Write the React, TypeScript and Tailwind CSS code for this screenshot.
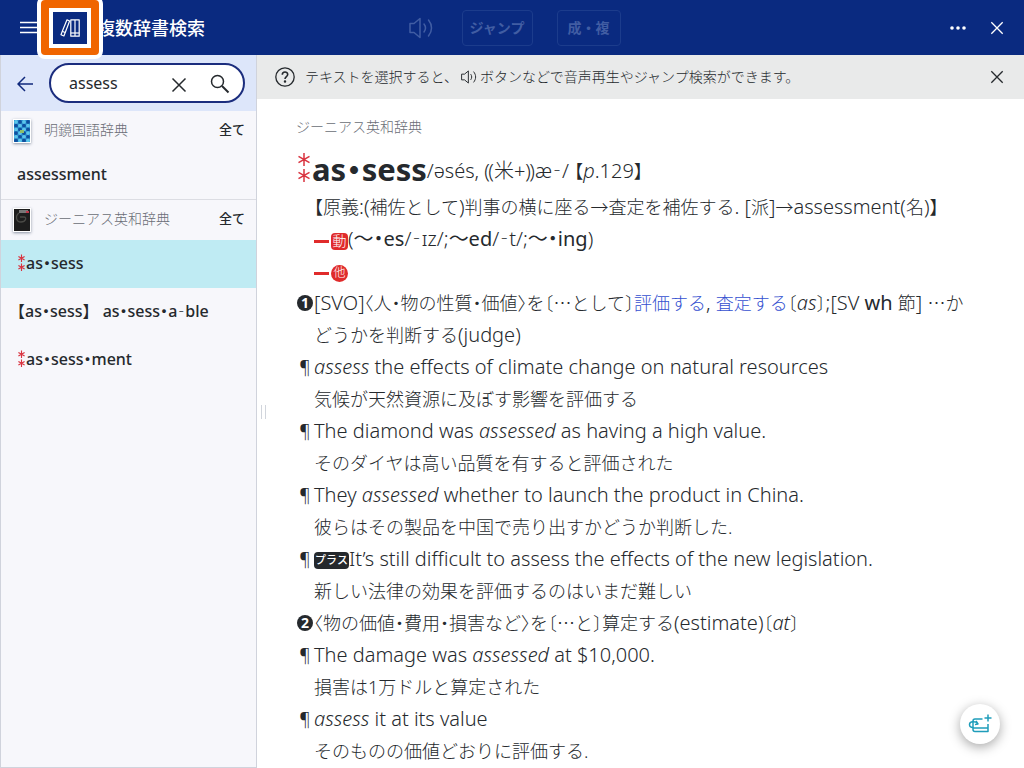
import React, { useState } from 'react';
import clsx from 'clsx';

interface Hit {
  id: string;
  word: string;
  stars?: boolean;
}

interface DictionaryGroup {
  id: string;
  name: string;
  cover: 'blue' | 'black';
  hits: Hit[];
}

const GROUPS: DictionaryGroup[] = [
  {
    id: 'meikyo',
    name: '明鏡国語辞典',
    cover: 'blue',
    hits: [{ id: 'm-1', word: 'assessment' }],
  },
  {
    id: 'genius',
    name: 'ジーニアス英和辞典',
    cover: 'black',
    hits: [
      { id: 'g-1', word: 'as・sess', stars: true },
      { id: 'g-2', word: '【as・sess】 as・sess・a‐ble' },
      { id: 'g-3', word: 'as・sess・ment', stars: true },
    ],
  },
];

const CloseIcon: React.FC<{ className?: string }> = ({ className }) => (
  <svg viewBox="0 0 16 16" className={className} fill="none" stroke="currentColor" strokeWidth="1.5">
    <path d="M1.5 1.5l13 13M14.5 1.5l-13 13" />
  </svg>
);

const SpeakerIcon: React.FC<{ className?: string }> = ({ className }) => (
  <svg viewBox="0 0 26 22" className={className} fill="none" stroke="currentColor" strokeWidth="1.5" strokeLinejoin="round" strokeLinecap="round">
    <path d="M2 6.5h4l6-5v19l-6-5H2z" />
    <path d="M16 7c1.8 2.4 1.8 5.6 0 8M20.5 3c4 4.8 4 11.2 0 16" />
  </svg>
);

const BooksIcon = () => (
  <svg viewBox="0 0 20 18" className="w-5 h-[18px]" fill="none" stroke="currentColor" strokeWidth="1.2" strokeLinejoin="round">
    <path d="M7 .8l2.6 1.2-5.7 15-2.9-1.3 1.5-4z" />
    <path d="M2.2 12.3l2.8 1.2" />
    <path d="M10.8 .8h4.2v16.4h-4.2zM15 .8h4.2v16.4H15z" />
    <path d="M10.8 14h8.4" />
  </svg>
);

const BlueCover = () => (
  <svg viewBox="0 0 16 22" className="w-4 h-[22px]">
    <rect width="16" height="22" fill="#2a8fd0" />
    {[0, 1, 2, 3, 4, 5].map((row) =>
      [0, 1, 2, 3].map((col) => (
        <circle
          key={`${row}-${col}`}
          cx={2 + col * 4}
          cy={2 + row * 3.7}
          r="1.9"
          fill={(row + col) % 2 ? '#0f4f9e' : '#5cc6ea'}
        />
      ))
    )}
    <rect x="6" y="10" width="4" height="3" fill="#8fbf6a" />
  </svg>
);

const BlackCover = () => (
  <svg viewBox="0 0 16 22" className="w-4 h-[22px]">
    <rect width="16" height="22" fill="#1d1d1d" />
    <path d="M5 4c-4 3-3 9 2 9s6-5 3-5H6" fill="none" stroke="#4a4a46" strokeWidth="1.3" />
    <rect x="5" y="1" width="9" height="3" fill="#777" />
    <rect x="12" y="2" width="3" height="2" fill="#c0354a" />
  </svg>
);

const Stars: React.FC<{ large?: boolean }> = ({ large }) => (
  <svg
    viewBox="0 0 14 32"
    className={clsx('inline-block shrink-0', large ? 'w-4 h-8' : 'w-[9px] h-[18px]')}
    fill="none"
    stroke="#d9333f"
    strokeWidth={large ? 1.5 : 2}
  >
    <path d="M7 1v13M1.5 4.3l11 6.4M12.5 4.3l-11 6.4" />
    <path d="M7 17v13M1.5 20.3l11 6.4M12.5 20.3l-11 6.4" />
  </svg>
);

// Syllable dots, hyphens and ellipses come from the Japanese face, set half width
const K: React.FC<{ children: React.ReactNode }> = ({ children }) => (
  <span className="font-['Noto_Sans_CJK_JP',sans-serif] leading-none [font-feature-settings:'halt']">{children}</span>
);

const E: React.FC<{ children: React.ReactNode }> = ({ children }) => (
  <span className="text-xl leading-none">{children}</span>
);

const Word: React.FC<{ text: string }> = ({ text }) => (
  <span>
    {text.split(/([・【‐])/).map((part, i) => (i % 2 ? <K key={i}>{part}</K> : part))}
  </span>
);

const Line: React.FC<{ mark?: React.ReactNode; large?: boolean; children: React.ReactNode }> = ({ mark, large, children }) => (
  <div className="flex">
    <span className="w-[18px] h-8 shrink-0 flex items-center justify-center">{mark}</span>
    <p className={clsx('whitespace-nowrap', large ? 'text-xl leading-8' : 'leading-8')}>{children}</p>
  </div>
);

const SenseNumber: React.FC<{ children: React.ReactNode }> = ({ children }) => (
  <span className="size-4 rounded-full bg-[#25292d] text-white text-sm leading-4 font-bold text-center">{children}</span>
);

const Dash = () => <span className="inline-block w-[15px] h-[3px] mr-0.5 bg-[#e02b2b] align-middle" />;

const Example: React.FC<{ ja: string; children: React.ReactNode }> = ({ ja, children }) => (
  <>
    <Line mark="¶" large>{children}</Line>
    <Line>{ja}</Line>
  </>
);

export default function App() {
  const [query, setQuery] = useState('assess');
  const [selected, setSelected] = useState('g-1');
  const [showTip, setShowTip] = useState(true);

  return (
    <div className="h-screen flex flex-col overflow-hidden bg-white text-[#25292d] font-['Noto_Sans','Noto_Sans_CJK_JP',sans-serif]">
      <header className="relative h-[55px] shrink-0 flex items-center bg-[#0a2a80] text-white">
        <div className="flex-1 flex items-center">
          <button aria-label="メニュー" className="ml-5 w-5">
            <svg viewBox="0 0 20 14" className="w-5 h-3.5" stroke="currentColor" strokeWidth="1.5">
              <path d="M0 1.5h20M0 6.5h20M0 11.5h20" />
            </svg>
          </button>
          <h1 className="ml-[57px] text-lg font-medium">複数辞書検索</h1>
        </div>
        {/* highlighted shortcut to the multi-dictionary search */}
        <button
          aria-label="辞書"
          className="absolute left-[37px] -top-1 w-[66px] h-[63px] rounded-lg border-4 border-white bg-[#f06500] flex items-center justify-center"
        >
          <span className="w-[42px] h-10 border-4 border-white bg-[#0a2a80] flex items-center justify-center">
            <BooksIcon />
          </span>
        </button>
        <div className="pl-6 flex items-center gap-6 text-[#415da3]">
          <button disabled aria-label="音声" className="mr-1">
            <SpeakerIcon className="w-[26px] h-[22px]" />
          </button>
          <button disabled className="w-[71px] h-9 rounded border border-[#1c3c8c] text-sm font-bold">ジャンプ</button>
          <button disabled className="w-16 h-9 rounded border border-[#1c3c8c] text-sm font-bold">成・複</button>
        </div>
        <div className="flex-1 flex items-center justify-end gap-6 pr-5">
          <button aria-label="その他">
            <svg viewBox="0 0 16 4" className="w-4 h-1" fill="currentColor">
              <circle cx="2" cy="2" r="1.8" />
              <circle cx="8" cy="2" r="1.8" />
              <circle cx="14" cy="2" r="1.8" />
            </svg>
          </button>
          <button aria-label="閉じる">
            <CloseIcon className="size-3.5" />
          </button>
        </div>
      </header>

      <div className="flex-1 min-h-0 flex">
        <aside className="w-[257px] shrink-0 flex flex-col border-x border-b border-[#d0d3dc] bg-[#f7f7fb]">
          <form className="h-14 shrink-0 flex items-center pl-4 pr-[11px] bg-[#dde6fa]" onSubmit={(e) => e.preventDefault()}>
            <button type="button" aria-label="戻る" className="pt-0.5 text-[#10297c]">
              <svg viewBox="0 0 16 16" className="size-4" fill="none" stroke="currentColor" strokeWidth="1.5">
                <path d="M16 8H1M8 1L1 8l7 7" />
              </svg>
            </button>
            <div className="ml-4 flex-1 min-w-0 h-10 flex items-center rounded-full border-2 border-[#1b2d7e] bg-white pl-[18px] pr-[13px]">
              <input
                type="text"
                aria-label="検索語"
                value={query}
                onChange={(e) => setQuery(e.target.value)}
                className="flex-1 min-w-0 text-base outline-none"
              />
              <button type="button" aria-label="消去" onClick={() => setQuery('')} className="pt-1">
                <CloseIcon className="size-4" />
              </button>
              <button type="submit" aria-label="検索" className="ml-[23px] pt-0.5">
                <svg viewBox="0 0 20 20" className="size-5" fill="none" stroke="currentColor">
                  <circle cx="7.5" cy="7.5" r="6" strokeWidth="1.5" />
                  <path d="M12 12l6.5 6.5" strokeWidth="2" />
                </svg>
              </button>
            </div>
          </form>

          {GROUPS.map((group, idx) => (
            <section key={group.id} className={clsx(idx > 0 && 'border-t border-[#dcdde3]')}>
              <div className="h-10 flex items-center pl-3 pr-[11px] pb-0.5">
                <span className="mt-0.5 border border-white bg-white shadow shadow-gray-400">
                  {group.cover === 'blue' ? <BlueCover /> : <BlackCover />}
                </span>
                <h2 className="ml-[13px] flex-1 text-sm font-light text-[#6a6e76]">{group.name}</h2>
                <button className="text-[13px] font-medium">全て</button>
              </div>
              <ul>
                {group.hits.map((hit) => (
                  <li key={hit.id}>
                    <button
                      onClick={() => setSelected(hit.id)}
                      className={clsx(
                        'w-full h-12 flex items-center px-4 pb-0.5 text-base font-medium text-left whitespace-pre',
                        selected === hit.id && 'bg-[#bfebf3]'
                      )}
                    >
                      {hit.stars && <Stars />}
                      <Word text={hit.word} />
                    </button>
                  </li>
                ))}
              </ul>
            </section>
          ))}
        </aside>

        <div className="w-3 shrink-0 flex items-center justify-center gap-[3px] -mr-3">
          <span className="w-px h-3.5 bg-gray-300" />
          <span className="w-px h-3.5 bg-gray-300" />
        </div>

        <main className="flex-1 min-w-0 flex flex-col overflow-hidden">
          {showTip && (
            <div className="h-11 shrink-0 flex items-center pl-[18px] pr-5 bg-[#e9eaea] text-sm font-light">
              <svg viewBox="0 0 20 20" className="size-5 mr-2.5" fill="none" stroke="currentColor" strokeWidth="1.3">
                <circle cx="10" cy="10" r="9.2" />
                <path d="M7.3 7.8c0-3.6 5.4-3.6 5.4-.2 0 2-2.7 2.2-2.7 4.4" strokeWidth="1.6" />
                <circle cx="10" cy="14.5" r=".6" />
              </svg>
              <p className="flex-1 flex items-center">
                テキストを選択すると、
                <SpeakerIcon className="w-[18px] h-3.5 mx-0.5" />
                ボタンなどで音声再生やジャンプ検索ができます。
              </p>
              <button aria-label="ヒントを閉じる" onClick={() => setShowTip(false)}>
                <CloseIcon className="size-3.5" />
              </button>
            </div>
          )}

          <article className="pl-[39px] pr-4 pt-4 text-lg leading-8 font-light [font-feature-settings:'halt']">
            <p className="text-sm leading-6 text-[#6a6e76]">ジーニアス英和辞典</p>
            <div className="h-[52px] pt-1.5 flex items-center whitespace-nowrap">
              <Stars large />
              <h2 className="text-[31px] font-bold">
                <Word text="as・sess" />
              </h2>
              <span className="pt-1.5">
                <E>/əsés, ⸨米+⸩æ<K>‐</K>/ </E>【<E><i>p</i>.129</E>】
              </span>
            </div>

            <Line>
              【原義<E>:(</E>補佐として<E>)</E>判事の横に座る→査定を補佐する<E>. [</E>派<E>]</E>→<E>assessment(</E>名<E>)</E>】
            </Line>
            <Line>
              <Dash />
              <span className="inline-block size-[17px] rounded-sm bg-[#e02b2b] text-white text-sm leading-4 text-center align-middle">動</span>
              <E>
                (<b>～<K>・</K>es</b>/<K>‐</K>ɪz/;<b>～ed</b>/<K>‐</K>t/;<b>～<K>・</K>ing</b>)
              </E>
            </Line>
            <Line>
              <Dash />
              <span className="inline-block size-[17px] rounded-full bg-[#e02b2b] text-white text-xs leading-4 text-center align-middle">他</span>
            </Line>

            <Line mark={<SenseNumber>1</SenseNumber>}>
              <E>[SVO]</E>〈人<K>・</K>物の性質<K>・</K>価値〉を〔<K>…</K>として〕
              <span className="text-[#3450d0]">評価する</span><E>, </E><span className="text-[#3450d0]">査定する</span>
              〔<E><i>as</i></E>〕<E>;[SV <b>wh</b> </E>節<E>] </E><K>…</K>か
              <br />
              どうかを判断する<E>(judge)</E>
            </Line>
            <Example ja="気候が天然資源に及ぼす影響を評価する">
              <i>assess</i> the effects of climate change on natural resources
            </Example>
            <Example ja="そのダイヤは高い品質を有すると評価された">
              The diamond was <i>assessed</i> as having a high value.
            </Example>
            <Example ja="彼らはその製品を中国で売り出すかどうか判断した.">
              They <i>assessed</i> whether to launch the product in China.
            </Example>
            <Example ja="新しい法律の効果を評価するのはいまだ難しい">
              <span className="inline-block w-[35px] h-[17px] rounded-sm bg-[#25292d] text-white text-[11px] leading-4 font-medium text-center align-middle">プラス</span>
              It’s still difficult to assess the effects of the new legislation.
            </Example>

            <Line mark={<SenseNumber>2</SenseNumber>}>
              〈物の価値<K>・</K>費用<K>・</K>損害など〉を〔<K>…</K>と〕算定する<E>(estimate)</E>〔<E><i>at</i></E>〕
            </Line>
            <Example ja="損害は1万ドルと算定された">
              The damage was <i>assessed</i> at $10,000.
            </Example>
            <Example ja="そのものの価値どおりに評価する.">
              <i>assess</i> it at its value
            </Example>
          </article>
        </main>
      </div>

      <button
        aria-label="単語帳に追加"
        className="absolute right-6 bottom-6 size-10 rounded-full bg-white shadow-[0_3px_12px_rgba(0,0,0,0.35)] flex items-center justify-center text-[#1f9dba]"
      >
        <svg viewBox="0 0 24 20" className="w-6 h-5" fill="none" stroke="currentColor" strokeWidth="1.5" strokeLinejoin="round">
          <path d="M14.5 5H7c-1.5 0-2 .8-2 2v8.500c0 1.200.6 2 2 2h13V10M5 14h15" />
          <path d="M9.500 9.500C8 7 1.500 7 1.500 10.500c0 2.500 1.500 3 3.500 3M8 7l2 3-3 .5" />
          <path d="M20 .5v7M16.500 4h7" />
        </svg>
      </button>
    </div>
  );
}
